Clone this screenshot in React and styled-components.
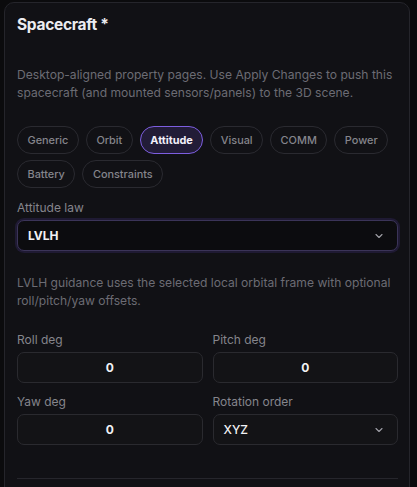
import React from "react";
import styled, { createGlobalStyle } from "styled-components";

const Global = createGlobalStyle`
  html, body { margin: 0; padding: 0; background: #0b0b0d; }
  body { font-family: Inter, "Noto Sans", sans-serif; -webkit-font-smoothing: antialiased; }
  #root { padding: 2px 0 0 4px; }
`;

const Card = styled.div`
  width: 406px;
  box-sizing: border-box;
  height: 520px;
  background: #111115;
  border: 1px solid #25252b;
  border-radius: 10px;
  padding: 11px 11px 0 12px;
`;

const Title = styled.h2`
  margin: 0;
  font-size: 15.5px;
  line-height: 22px;
  font-weight: 700;
  letter-spacing: -0.3px;
  color: #ececf0;
`;

const Desc = styled.p`
  margin: ${(p) => p.$mt || 0}px 0 0;
  font-size: 12.1px;
  line-height: 18px;
  color: #6c6c74;
`;

const Tabs = styled.div`
  display: flex;
  flex-wrap: wrap;
  gap: 6px 7px;
  margin-top: 24px;
`;

const Tab = styled.button`
  height: 28px;
  box-sizing: border-box;
  padding: 0 9.5px;
  border-radius: 14px;
  font-family: inherit;
  font-size: 10.9px;
  font-weight: ${(p) => (p.$active ? 700 : 500)};
  color: ${(p) => (p.$active ? "#f2f0fa" : "#85858c")};
  background: ${(p) => (p.$active ? "#221c37" : "transparent")};
  border: 1px solid ${(p) => (p.$active ? "#7d5ee0" : "#2a2a30")};
  cursor: pointer;
`;

const Label = styled.div`
  font-size: 12px;
  line-height: 15px;
  color: #85858c;
  margin-top: ${(p) => p.$mt || 0}px;
`;

const SelectBox = styled.div`
  height: 31px;
  box-sizing: border-box;
  display: flex;
  align-items: center;
  justify-content: space-between;
  padding: 0 12px 0 10px;
  background: ${(p) => (p.$focus ? "#0c0c0f" : "#131316")};
  border: 1px solid ${(p) => (p.$focus ? "#3b3458" : "#2a2a2f")};
  box-shadow: ${(p) => (p.$focus ? "0 0 0 2px #1f1a33" : "none")};
  border-radius: 7px;
  margin-top: 5px;
  font-size: 12px;
  font-weight: ${(p) => (p.$focus ? 700 : 500)};
  color: #f1f1f4;
`;

const Input = styled.div`
  height: 31px;
  box-sizing: border-box;
  display: flex;
  align-items: center;
  justify-content: center;
  background: #131316;
  border: 1px solid #2a2a2f;
  border-radius: 7px;
  margin-top: 5px;
  font-size: 12px;
  font-weight: 700;
  color: #f1f1f4;
`;

const Grid = styled.div`
  display: grid;
  grid-template-columns: 1fr 1fr;
  column-gap: 10px;
  row-gap: 11px;
  margin-top: 22px;
`;

const Field = styled.div``;

const Divider = styled.div`
  height: 1px;
  background: #26262c;
  margin-top: 33px;
`;

const Chevron = () => (
  <svg width="12" height="12" viewBox="0 0 24 24" fill="none" stroke="#a0a0a8" strokeWidth="2.2" strokeLinecap="round" strokeLinejoin="round">
    <path d="m6 9 6 6 6-6" />
  </svg>
);

const tabs = ["Generic", "Orbit", "Attitude", "Visual", "COMM", "Power", "Battery", "Constraints"];

export default function App() {
  return (
    <>
      <Global />
      <Card>
        <Title>Spacecraft *</Title>
        <Desc $mt={30}>
          Desktop-aligned property pages. Use Apply Changes to push this spacecraft (and mounted sensors/panels) to the 3D scene.
        </Desc>
        <Tabs>
          {tabs.map((t) => (
            <Tab key={t} $active={t === "Attitude"}>{t}</Tab>
          ))}
        </Tabs>
        <Label $mt={12}>Attitude law</Label>
        <SelectBox $focus>
          <span>LVLH</span>
          <Chevron />
        </SelectBox>
        <Desc $mt={23}>
          LVLH guidance uses the selected local orbital frame with optional roll/pitch/yaw offsets.
        </Desc>
        <Grid>
          <Field>
            <Label>Roll deg</Label>
            <Input>0</Input>
          </Field>
          <Field>
            <Label>Pitch deg</Label>
            <Input>0</Input>
          </Field>
          <Field>
            <Label>Yaw deg</Label>
            <Input>0</Input>
          </Field>
          <Field>
            <Label>Rotation order</Label>
            <SelectBox>
              <span>XYZ</span>
              <Chevron />
            </SelectBox>
          </Field>
        </Grid>
        <Divider />
      </Card>
    </>
  );
}
